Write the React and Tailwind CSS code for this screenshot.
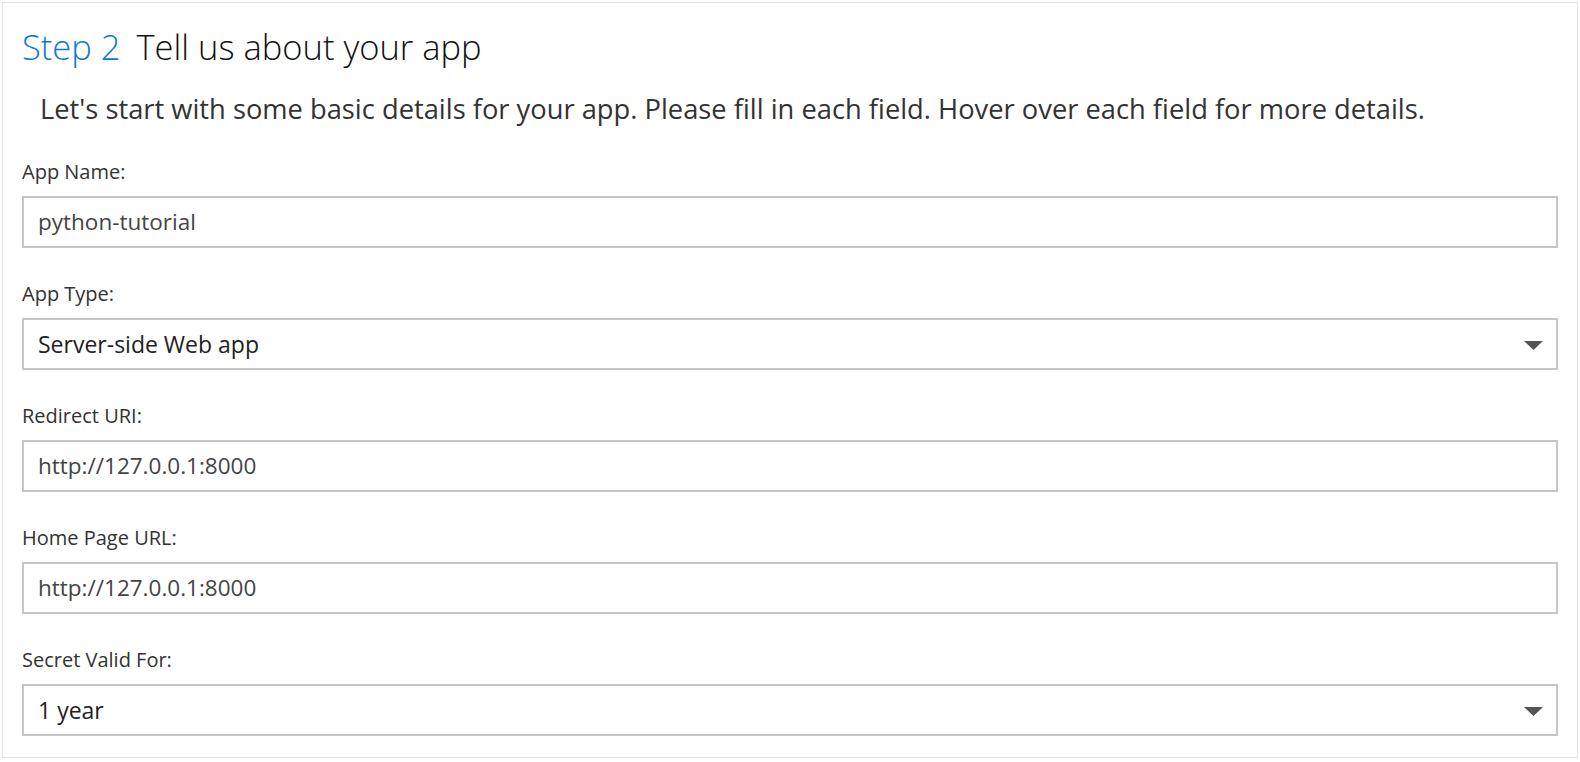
import { useState } from 'react';

const fields = [
  { label: 'App Name:', value: 'python-tutorial', type: 'text' },
  { label: 'App Type:', value: 'Server-side Web app', type: 'select' },
  { label: 'Redirect URI:', value: 'http://127.0.0.1:8000', type: 'text' },
  { label: 'Home Page URL:', value: 'http://127.0.0.1:8000', type: 'text' },
  { label: 'Secret Valid For:', value: '1 year', type: 'select' },
];

function Caret() {
  return (
    <svg width="19" height="9" viewBox="0 0 19 9" className="shrink-0 mt-[3px]">
      <path d="M0 0 H19 L9.5 9 Z" fill="#555" />
    </svg>
  );
}

function Field({ label, value, type }) {
  const [val, setVal] = useState(value);
  return (
    <div className="flex flex-col">
      <label className="text-[20px] leading-[24px] text-[#333] h-[24px]">{label}</label>
      <div className="mt-[12px] h-[52px] border-2 border-[#c6c6c6] bg-white flex items-center pl-[14px] pr-[13px]">
        {type === 'select' ? (
          <>
            <span className="flex-1 text-[23px] text-[#222]">{val}</span>
            <Caret />
          </>
        ) : (
          <input
            value={val}
            onChange={e => setVal(e.target.value)}
            className="flex-1 text-[22.5px] text-[#444] outline-none bg-transparent"
          />
        )}
      </div>
    </div>
  );
}

export default function App() {
  return (
    <div className="w-[1580px] h-[762px] bg-white p-[2px] font-['Open_Sans',sans-serif]">
      <div className="h-[756px] border border-[#e3e3e3] px-[19px] pt-[20px]">
        <h1 className="text-[34.5px] leading-[48px] font-light text-[#111] flex gap-[16px]">
          <span className="text-[#0f78d6]">Step 2</span>
          <span>Tell us about your app</span>
        </h1>
        <p className="mt-[21px] pl-[18px] text-[27.3px] leading-[34px] text-[#333]">
          Let's start with some basic details for your app. Please fill in each field. Hover over each field for more details.
        </p>
        <div className="mt-[34px] flex flex-col gap-[34px]">
          {fields.map(f => <Field key={f.label} {...f} />)}
        </div>
      </div>
    </div>
  );
}
